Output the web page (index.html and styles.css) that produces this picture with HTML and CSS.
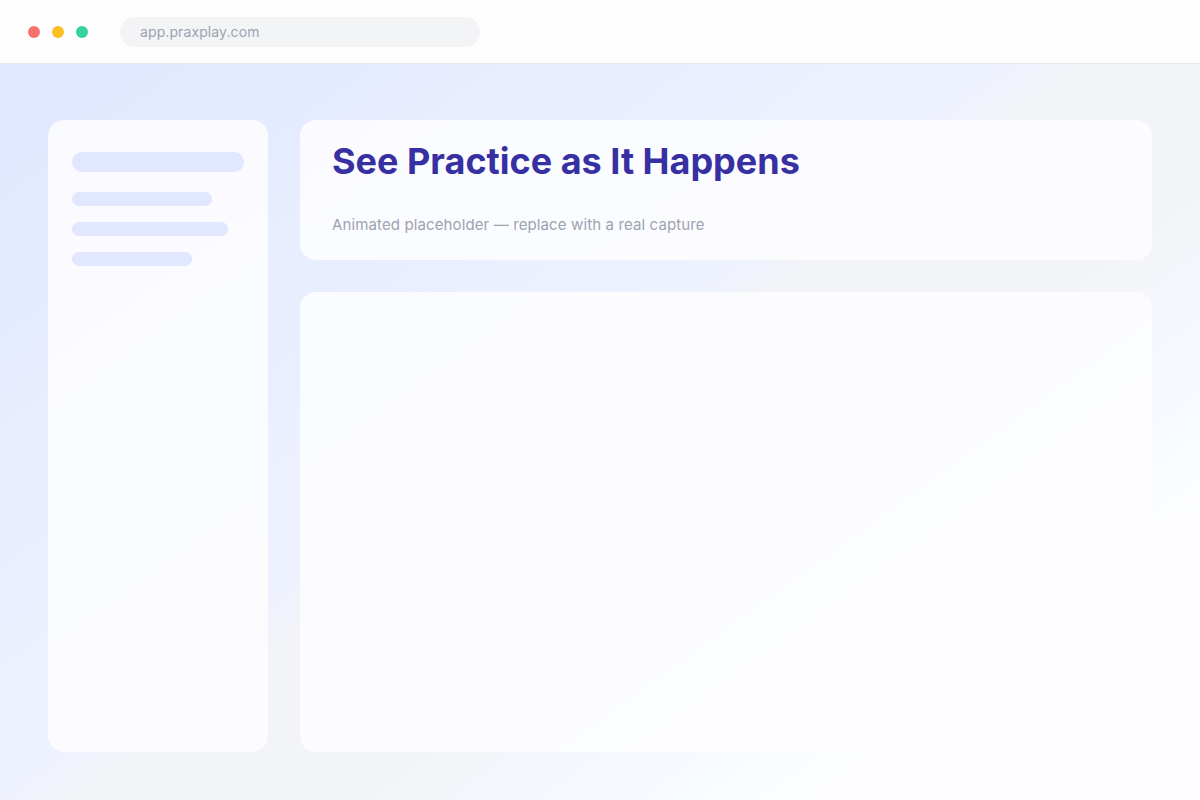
FILE: index.html
```html
<!DOCTYPE html>
<html lang="en">
<head>
    <meta charset="UTF-8">
    <meta name="viewport" content="width=device-width, initial-scale=1.0">
    <title>PraxPlay - Live Practice</title>
    <link rel="stylesheet" href="styles.css">
</head>
<body>
    <div class="window">
        <div class="chrome">
            <div class="dots">
                <span class="dot dot-red"></span>
                <span class="dot dot-yellow"></span>
                <span class="dot dot-green"></span>
            </div>
            <div class="url-bar">app.praxplay.com</div>
        </div>

        <div class="stage">
            <div class="sidebar">
                <div class="skeleton skeleton-title"></div>
                <div class="skeleton-list">
                    <div class="skeleton skeleton-line line-1"></div>
                    <div class="skeleton skeleton-line line-2"></div>
                    <div class="skeleton skeleton-line line-3"></div>
                </div>
            </div>

            <div class="content">
                <div class="card intro">
                    <h1>See Practice as It Happens</h1>
                    <p>Animated placeholder — replace with a real capture</p>
                </div>
                <div class="card capture"></div>
            </div>
        </div>
    </div>
</body>
</html>
```

FILE: styles.css
```css
* {
    box-sizing: border-box;
}
body {
    margin: 0;
    font-family: Inter, "Noto Sans", sans-serif;
    background: #f3f4f6;
}
.window {
    width: 1200px;
    height: 800px;
    display: flex;
    flex-direction: column;
}

/* browser chrome */
.chrome {
    height: 64px;
    display: flex;
    align-items: center;
    gap: 32px;
    padding-left: 28px;
    background-color: #fdfdfe;
    border-bottom: 1px solid #e5e7eb;
}
.dots {
    display: flex;
    gap: 12px;
}
.dot {
    width: 12px;
    height: 12px;
    border-radius: 50%;
}
.dot-red {
    background-color: #f87171;
}
.dot-yellow {
    background-color: #fbbf24;
}
.dot-green {
    background-color: #34d399;
}
.url-bar {
    width: 360px;
    height: 30px;
    line-height: 30px;
    padding-left: 20px;
    border-radius: 15px;
    background-color: #f3f4f6;
    color: #9ca3af;
    font-size: 14px;
    letter-spacing: 0.1px;
}

/* page area */
.stage {
    flex: 1;
    display: grid;
    grid-template-columns: 220px 1fr;
    gap: 32px;
    padding: 56px 48px 48px;
    background: linear-gradient(144deg,
        #e0e7ff 0%,
        #e9eeff 28%,
        #edf1ff 42%,
        #eef2ff 45%,
        #f3f4f6 50%,
        #f3f4f6 62%,
        #f5f7fe 68%,
        #f7f9ff 74%,
        #fcfdff 80%,
        #fdfdff 100%);
}
.sidebar {
    background: rgba(253, 253, 255, 0.9);
    border-radius: 16px;
    padding: 32px 24px;
}
.skeleton {
    background-color: #e0e7ff;
}
.skeleton-title {
    height: 20px;
    border-radius: 10px;
}
.skeleton-list {
    margin-top: 20px;
    display: flex;
    flex-direction: column;
    gap: 16px;
}
.skeleton-line {
    height: 14px;
    border-radius: 7px;
}
.line-1 {
    width: 140px;
}
.line-2 {
    width: 156px;
}
.line-3 {
    width: 120px;
}

.content {
    display: flex;
    flex-direction: column;
    gap: 32px;
}
.card {
    background: rgba(253, 253, 255, 0.9);
    border-radius: 16px;
}
.intro {
    padding: 21px 32px 24px;
}
.intro h1 {
    margin: 0;
    font-size: 36px;
    line-height: 40px;
    font-weight: 700;
    color: #3730a3;
}
.intro p {
    margin: 33px 0 0;
    font-size: 15px;
    line-height: 22px;
    color: #9ca3af;
    letter-spacing: 0.12px;
}
.capture {
    flex: 1;
}
```
